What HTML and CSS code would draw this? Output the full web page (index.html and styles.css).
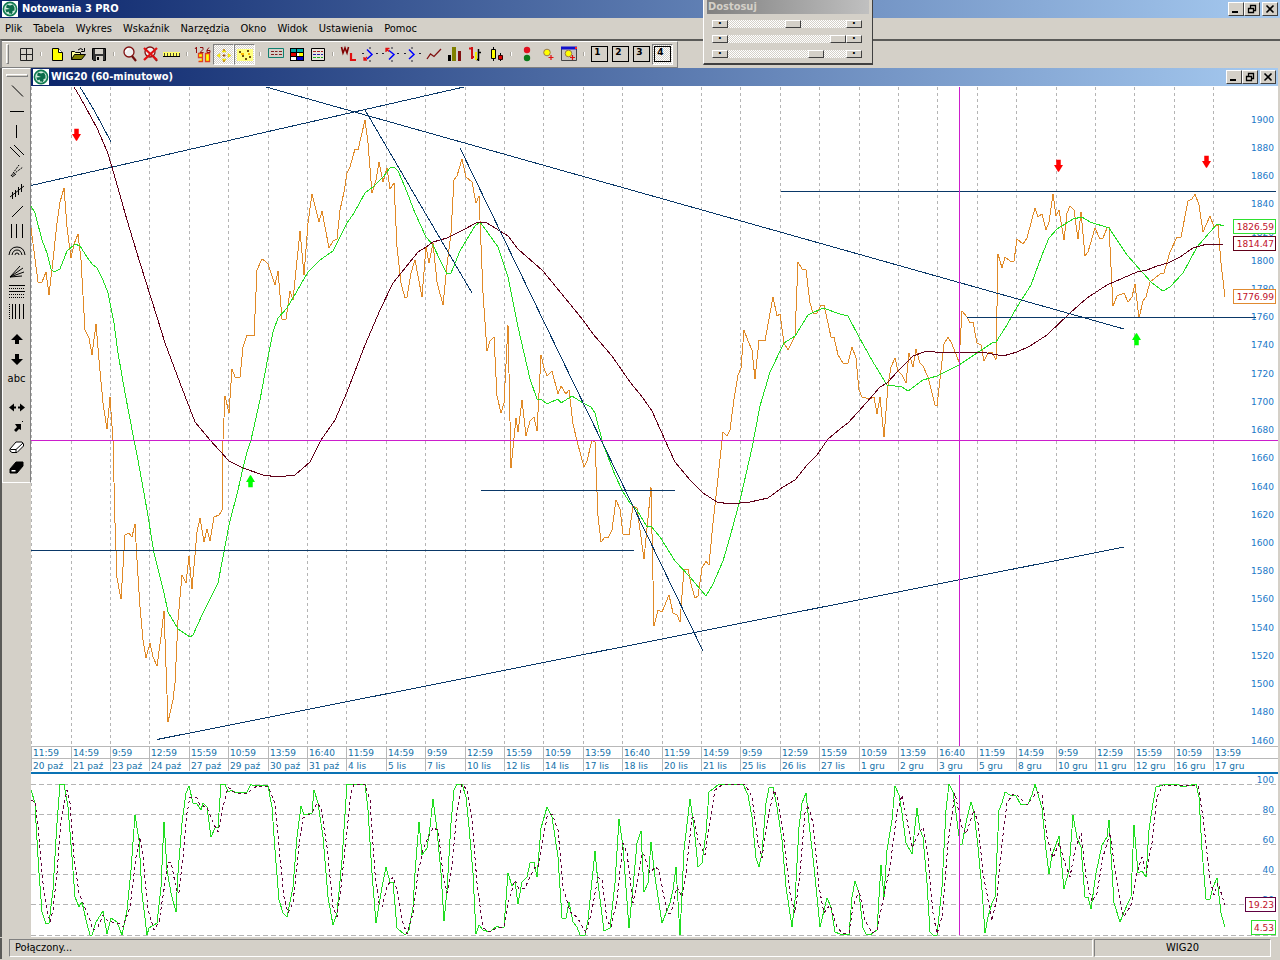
FILE: index.html
```html
<!DOCTYPE html>
<html lang="pl">
<head>
<meta charset="utf-8">
<title>Notowania 3 PRO</title>
<link rel="stylesheet" href="styles.css">
</head>
<body>
<svg class="defs" aria-hidden="true">
  <symbol id="logo" viewBox="0 0 16 16">
    <rect width="16" height="16" fill="#fff"/>
    <circle cx="8" cy="8" r="6.600" fill="#cfeadb" stroke="#0f7a50" stroke-width="1.600"/>
    <path d="M8 8L4 6.500L5 3.500L8 4.500L11 3.500L12.500 6.500L12.500 9.500L10.500 10L10.500 12L7.500 12.800L6.500 10.500L4.500 11.500L3.300 8.500Z" fill="#0b6b4a"/>
    <path d="M8.500 8.500L9.500 13" stroke="#0b6b4a"/>
  </symbol>
  <symbol id="win-min" viewBox="0 0 12 10"><path d="M2 8h6" stroke="#000" stroke-width="2"/></symbol>
  <symbol id="win-restore" viewBox="0 0 12 10"><path d="M4.500 4V1.500h5v5H8M4 1.500h6M2.500 4.500h5v4h-5zM2 4.500h6" fill="none" stroke="#000" stroke-width="1.300"/></symbol>
  <symbol id="win-close" viewBox="0 0 12 10"><path d="M2.500 1.500l7 7M9.500 1.500l-7 7" stroke="#000" stroke-width="1.600"/></symbol>
  <symbol id="arrow-down" viewBox="0 0 10 14"><path d="M2.500 0h5v6H10L5.500 13.500h-1L0 6h2.500z"/></symbol>
  <symbol id="arrow-up" viewBox="0 0 10 14"><path d="M2.500 14h5V8H10L5.500.5h-1L0 8h2.500z"/></symbol>
</svg>

<div class="app">
  <header class="titlebar">
    <svg class="logo"><use href="#logo"/></svg>
    <h1 class="title">Notowania 3 PRO</h1>
    <div class="controls">
      <button class="ctl" aria-label="Minimalizuj"><svg><use href="#win-min"/></svg></button>
      <button class="ctl" aria-label="Przywróć"><svg><use href="#win-restore"/></svg></button>
      <button class="ctl ctl-close" aria-label="Zamknij"><svg><use href="#win-close"/></svg></button>
    </div>
  </header>

  <nav class="menu">
    <button>Plik</button><button>Tabela</button><button>Wykres</button><button>Wskaźnik</button><button>Narzędzia</button><button>Okno</button><button>Widok</button><button>Ustawienia</button><button>Pomoc</button>
  </nav>

  <div class="toolbar-row">
    <div class="toolbar" role="toolbar" aria-label="Narzędzia główne">
      <span class="grip"></span>
      <button class="tb" aria-label="Siatka"><svg viewBox="0 0 20 20"><path d="M4.500 4.500h12v12h-12zM10.500 4v13M4 10.500h13" fill="none" stroke="#222"/></svg></button>
      <span class="sep"></span>
      <button class="tb" aria-label="Nowy"><svg viewBox="0 0 20 20"><path d="M5.500 4.500h6l4 4v8h-10z" fill="#ff0" stroke="#000"/><path d="M11.500 4.500v4h4" fill="#fff" stroke="#000"/></svg></button>
      <button class="tb" aria-label="Otwórz"><svg viewBox="0 0 20 20"><path d="M3.500 15.500v-8h3l1 1h5v3" fill="#ff9" stroke="#000"/><path d="M3.500 15.500l3-5h11l-4 5z" fill="#808000" stroke="#000"/><path d="M10 6q3-3 5 0M16.500 4v3.500h-3.500" fill="none" stroke="#000"/></svg></button>
      <button class="tb" aria-label="Zapisz"><svg viewBox="0 0 20 20"><path d="M3.500 4.500h13v12h-12l-1-1z" fill="#333" stroke="#000"/><path d="M6 5h8v5H6z" fill="#d4d0c8"/><path d="M7 12h7v5H7z" fill="#d4d0c8"/><path d="M8 13h2v3H8z" fill="#000"/></svg></button>
      <span class="sep"></span>
      <button class="tb" aria-label="Powiększ"><svg viewBox="0 0 20 20"><circle cx="9" cy="8" r="5" fill="#eee" stroke="#801010" stroke-width="1.300"/><path d="M5.500 8q1-3 3.500-3" fill="none" stroke="#fff" stroke-width="1.500"/><path d="M12 12l4 5" stroke="#701010" stroke-width="2.200"/></svg></button>
      <button class="tb" aria-label="Anuluj powiększenie"><svg viewBox="0 0 20 20"><circle cx="9" cy="8" r="5" fill="#eee" stroke="#801010" stroke-width="1.300"/><path d="M12 12l4 5" stroke="#701010" stroke-width="2"/><path d="M3 4l13 12M16 4L3 16" stroke="#e01010" stroke-width="2.300"/></svg></button>
      <button class="tb" aria-label="Linijka"><svg viewBox="0 0 20 20"><path d="M1 8h17v5H1z" fill="#ff6"/><path d="M1 12.500h17" stroke="#000"/><path d="M2.500 9v3M5.500 9v3M8.500 9v3M11.500 9v3M14.500 9v3M17.500 9v3" stroke="#443"/></svg></button>
      <span class="sep"></span>
      <button class="tb" aria-label="Wartości"><svg viewBox="0 0 20 20"><path d="M2 5l1.500-2v6M7 3.500h3v2L7 8.500h3.500M16 3.500l-2 2.500v2.500h3V6.500h-3" fill="none" stroke="#901010"/><path d="M9.500 13.500h-4v-4h4v8h-4M12.500 9.500h4v8h-4z" fill="#ff0" stroke="#e04020" stroke-width="1.300"/></svg></button>
      <button class="tb on" aria-pressed="true" aria-label="Kursor"><svg viewBox="0 0 20 20"><path d="M10 4l2 3h-4zM10 17l2-3h-4zM3 10.500l3-2v4zM17 10.500l-3-2v4z" fill="#ff0" stroke="#e0c000" stroke-width=".5"/><path d="M10 9v3M8.500 10.500h3M10 4v2M10 15v2" stroke="#a05010"/></svg></button>
      <button class="tb on" aria-pressed="true" aria-label="Punkty"><svg viewBox="0 0 20 20"><path d="M2 4h16v12H2z" fill="#ffff80"/><path d="M4 6h2v2H4zM12 5h2v2h-2zM7 10h2v2H7zM14 11h2v2h-2zM10 13h2v2h-2z" fill="#705010"/><path d="M6 8h3v2H6zM13 8h2v2h-2z" fill="#fb0"/></svg></button>
      <span class="sep"></span>
      <button class="tb" aria-label="Tabela notowań"><svg viewBox="0 0 20 20"><path d="M2.500 4.500h15v9h-15z" fill="#d4d0c8" stroke="#108070"/><path d="M5 7.500h3M9 7.500h2.500M13 7.500h3M5 10.500h3M9 10.500h2.500M13 10.500h3" stroke="#802020"/></svg></button>
      <button class="tb" aria-label="Mozaika"><svg viewBox="0 0 20 20"><path d="M3 4h14v13H3z" fill="#000"/><path d="M4 5h5v3H4z" fill="#0aa"/><path d="M4 9h5v3H4z" fill="#d00"/><path d="M10 5h6v3h-6z" fill="#0aa"/><path d="M4 13h5v3H4zM10 9h2v3h-2z" fill="#fff"/><path d="M12 9h4v3h-4z" fill="#ff0"/><path d="M10 13h6v3h-6z" fill="#00c"/></svg></button>
      <button class="tb" aria-label="Lista"><svg viewBox="0 0 20 20"><path d="M3.500 4.500h13v12h-13z" fill="#e8e4dc" stroke="#000"/><path d="M5 7.500h10" stroke="#a22" stroke-dasharray="3 1"/><path d="M5 10.500h10" stroke="#22a" stroke-dasharray="3 1"/><path d="M5 13.500h10" stroke="#2a2" stroke-dasharray="3 1"/></svg></button>
      <span class="sep"></span>
      <button class="tb" aria-label="Wskaźnik WL"><svg viewBox="0 0 20 20"><path d="M2.500 3l1.500 6l2-5l2 5l1.500-6" fill="none" stroke="#800000" stroke-width="1.600"/><path d="M12 9v7h5" fill="none" stroke="#e01010" stroke-width="2.200"/></svg></button>
      <button class="tb" aria-label="Fala w dół"><svg viewBox="0 0 20 20"><path d="M7 5.500l5 5l-5 4.500" fill="none" stroke="#00f" stroke-width="1.500"/><path d="M2 9.500h2M16 9.500h2M10 3v2M10 16v2" stroke="#223"/><path d="M4 13v3h3M4 16l3-3" fill="none" stroke="#e01010" stroke-width="1.300"/></svg></button>
      <button class="tb" aria-label="Fala w górę"><svg viewBox="0 0 20 20"><path d="M8 6.500l5 4l-5 5" fill="none" stroke="#00f" stroke-width="1.500"/><path d="M1 9.500h2M16 9.500h2M11 3v2M11 16v2" stroke="#223"/><path d="M5 8V4.500h3.500M5 4.500l3 3" fill="none" stroke="#e01010" stroke-width="1.300"/></svg></button>
      <button class="tb" aria-label="Fala"><svg viewBox="0 0 20 20"><path d="M7 5.500l5 5l-5 4.500" fill="none" stroke="#00f" stroke-width="1.500"/><path d="M2 9.500h2M17 9.500h2M10 3v2M10 16v2" stroke="#223"/></svg></button>
      <button class="tb" aria-label="Liniowy"><svg viewBox="0 0 20 20"><path d="M4 15l3.500-5l3.500 2.500L18 5" fill="none" stroke="#801010" stroke-width="1.300"/></svg></button>
      <button class="tb" aria-label="Słupkowy"><svg viewBox="0 0 20 20"><path d="M4 11h3v6H4z" fill="#000"/><path d="M8 3h4v14H8z" fill="#808000"/><path d="M14 7h3v10h-3z" fill="#801010"/></svg></button>
      <button class="tb" aria-label="Barowy"><svg viewBox="0 0 20 20"><path d="M7 3v12M4 4.500h3M7 13h2" stroke="#d01010" stroke-width="2"/><path d="M13.500 5v12M11 15.500h2.500M13.500 8.500h2.500" stroke="#000" stroke-width="1.500"/><path d="M11 8v8" stroke="#ee0" stroke-width="2"/></svg></button>
      <button class="tb" aria-label="Świecowy"><svg viewBox="0 0 20 20"><path d="M7.500 3v14M14.500 9v8" stroke="#000"/><path d="M5.500 5.500h4v9h-4z" fill="#ff0" stroke="#000"/><path d="M12.500 11.500h4v4h-4z" fill="#d00" stroke="#300"/></svg></button>
      <span class="sep"></span>
      <button class="tb" aria-label="Sygnały"><svg viewBox="0 0 20 20"><circle cx="10" cy="6" r="3.200" fill="#e01020"/><circle cx="10" cy="14" r="3.200" fill="#0a7a1a"/></svg></button>
      <button class="tb" aria-label="Dodaj alarm"><svg viewBox="0 0 20 20"><circle cx="9" cy="8.500" r="3.300" fill="#ff0" stroke="#987a50"/><path d="M13 11v5M10.500 13.500h5" stroke="#e01010" stroke-width="1.200"/></svg></button>
      <button class="tb" aria-label="Okno alarmów"><svg viewBox="0 0 20 20"><path d="M2.500 3.500h15v13h-15z" fill="#c8c4c0" stroke="#444"/><path d="M2 4h16" stroke="#11c" stroke-width="3"/><path d="M16 3h2v2h-2z" fill="#f22"/><circle cx="9.500" cy="9.500" r="3.300" fill="#ff0" stroke="#987a50"/><path d="M13.500 11v5M11 13.500h5" stroke="#e01010" stroke-width="1.200"/></svg></button>
      <span class="sep"></span>
      <button class="tb num"><span>1</span></button>
      <button class="tb num"><span>2</span></button>
      <button class="tb num"><span>3</span></button>
      <button class="tb num on" aria-pressed="true"><span>4</span></button>
    </div>
  </div>

  <div class="body">
    <aside class="side">
      <div class="tools" role="toolbar" aria-label="Rysowanie" aria-orientation="vertical">
        <span class="hgrip"></span>
        <button class="tool" aria-label="Odcinek malejący"><svg viewBox="0 0 20 20"><path d="M5 4.500l11 11"/></svg></button>
        <button class="tool" aria-label="Linia pozioma"><svg viewBox="0 0 20 20"><path d="M3 10.500h14"/></svg></button>
        <button class="tool" aria-label="Linia pionowa"><svg viewBox="0 0 20 20"><path d="M9.500 4v13"/></svg></button>
        <button class="tool" aria-label="Kanał"><svg viewBox="0 0 20 20"><path d="M3 6l10 10M7 4l10 10"/></svg></button>
        <button class="tool" aria-label="Widły"><svg viewBox="0 0 20 20"><path d="M4 15L12 4M4 15l12-9" stroke-dasharray="2 1"/><path d="M5 16l4-3"/></svg></button>
        <button class="tool" aria-label="Regresja"><svg viewBox="0 0 20 20"><path d="M3 16L17 5M5.500 11v7M8.500 9v7M11.500 6v8M14.500 3v8"/></svg></button>
        <button class="tool" aria-label="Linia trendu"><svg viewBox="0 0 20 20"><path d="M5 16L16 5"/></svg></button>
        <button class="tool" aria-label="Cykle"><svg viewBox="0 0 20 20"><path d="M4.500 3v14M9.500 3v14M15.500 3v14"/></svg></button>
        <button class="tool" aria-label="Łuki"><svg viewBox="0 0 20 20"><path d="M2 14Q3 6 10 6t8 8M5 14q1-5 5-5t5 5M8 14q0-2 2-2t2 2"/></svg></button>
        <button class="tool" aria-label="Wachlarz"><svg viewBox="0 0 20 20"><path d="M3 16L13 5M3 16L16 7M3 16l14-5M3 16l12-1"/></svg></button>
        <button class="tool" aria-label="Zniesienia"><svg viewBox="0 0 20 20"><path d="M2 4.500h16M2 10.500h16"/><path d="M2 7.500h16M2 13.500h16M2 16.500h16" stroke-dasharray="1 1"/></svg></button>
        <button class="tool" aria-label="Strefy czasu"><svg viewBox="0 0 20 20"><path d="M5.500 3v15M8.500 3v15M12.500 3v15M16.500 3v15"/><path d="M2.500 3v15" stroke-dasharray="1 1"/></svg></button>
        <span class="vsep"></span>
        <button class="tool solid" aria-label="Strzałka w górę"><svg viewBox="0 0 20 20"><path d="M10 5l6 6h-4v4H8v-4H4z"/></svg></button>
        <button class="tool solid" aria-label="Strzałka w dół"><svg viewBox="0 0 20 20"><path d="M10 16l6-6h-4V5H8v5H4z"/></svg></button>
        <button class="tool text">abc</button>
        <span class="vsep"></span>
        <button class="tool solid" aria-label="Przesuń"><svg viewBox="0 0 20 20"><path d="M2 10.500l5-4v3h2v2H7v3zM18 10.500l-5-4v3h-2v2h2v3z"/></svg></button>
        <button class="tool solid" aria-label="Zaznacz"><svg viewBox="0 0 20 20"><path d="M8 7h6v6l-2-1l-3 3l-2-2l3-3z"/><path d="M15 4h1v1h-1z"/></svg></button>
        <button class="tool" aria-label="Gumka"><svg viewBox="0 0 20 20"><path d="M3 12l6-7h6l1.500 2v2L10 15.500H5L3 14z" fill="#fff"/><path d="M3.500 12.500H9L16 6M9 12.500v3"/></svg></button>
        <button class="tool" aria-label="Usuń wszystko"><svg viewBox="0 0 20 20"><path d="M3 12l6-7h7v4L10 16H3z" fill="#000"/><path d="M4 12.500h5v2.500H4z" fill="#fff"/></svg></button>
      </div>
    </aside>

    <main class="child">
      <div class="titlebar">
        <svg class="logo"><use href="#logo"/></svg>
        <h2 class="title">WIG20 (60-minutowo)</h2>
        <div class="controls">
          <button class="ctl" aria-label="Minimalizuj wykres"><svg><use href="#win-min"/></svg></button>
          <button class="ctl" aria-label="Przywróć wykres"><svg><use href="#win-restore"/></svg></button>
          <button class="ctl ctl-close" aria-label="Zamknij wykres"><svg><use href="#win-close"/></svg></button>
        </div>
      </div>

      <svg class="chart" viewBox="31 86 1247 688" role="img" aria-label="Wykres WIG20">
        <path class="grid" d="M31.500 87V746M71.500 87V746M110.500 87V746M149.500 87V746M189.500 87V746M228.500 87V746M268.500 87V746M307.500 87V746M346.500 87V746M386.500 87V746M425.500 87V746M465.500 87V746M504.500 87V746M543.500 87V746M583.500 87V746M622.500 87V746M662.500 87V746M701.500 87V746M740.500 87V746M780.500 87V746M819.500 87V746M859.500 87V746M898.500 87V746M937.500 87V746M977.500 87V746M1016.500 87V746M1056.500 87V746M1095.500 87V746M1134.500 87V746M1174.500 87V746M1213.500 87V746"/>
        <path class="axis" d="M31 746.500H1278M31 758.500H1278M31.500 746V771M71.500 746V771M110.500 746V771M149.500 746V771M189.500 746V771M228.500 746V771M268.500 746V771M307.500 746V771M346.500 746V771M386.500 746V771M425.500 746V771M465.500 746V771M504.500 746V771M543.500 746V771M583.500 746V771M622.500 746V771M662.500 746V771M701.500 746V771M740.500 746V771M780.500 746V771M819.500 746V771M859.500 746V771M898.500 746V771M937.500 746V771M977.500 746V771M1016.500 746V771M1056.500 746V771M1095.500 746V771M1134.500 746V771M1174.500 746V771M1213.500 746V771"/>

        <polyline class="price" points="31,228 38,282 42,282 46,272 49,295 53,260 57,223 60,202 64,188 67,227 71,258 74,244 78,234 81,260 85,330 89,338 92,355 96,324 99,360 103,403 107,429 110,397 113,440 115,523 117,578 121,599 125,535 129,533 132,537 135,524 137,560 140,607 143,640 146,658 150,643 153,657 157,666 161,637 164,611 168,722 173,700 175,683 178,620 182,575 186,583 189,556 192,589 197,532 200,518 204,542 207,529 210,541 214,517 219,515 222,511 223,440 225,396 229,413 232,369 235,377 240,377 243,347 247,335 254,336 257,270 262,259 265,261 268,264 275,285 278,271 282,319 286,319 290,291 293,300 300,231 304,275 308,223 312,194 319,222 322,211 329,248 333,241 337,239 340,210 344,192 347,173 350,167 355,149 358,150 365,120 368,143 372,193 376,180 379,162 383,182 387,168 390,189 394,183 397,247 401,283 405,298 407,297 411,273 415,260 422,297 426,247 429,263 433,243 437,282 443,305 447,265 451,233 454,180 457,176 462,159 466,177 472,182 476,203 479,196 483,293 487,351 490,341 494,337 497,396 501,413 504,403 508,325 511,468 516,418 518,432 522,400 526,436 530,421 534,417 537,431 541,355 544,368 547,376 552,371 558,394 561,386 566,394 569,390 573,424 577,441 584,467 587,461 592,440 595,442 598,516 601,542 605,537 608,538 612,530 616,500 620,509 623,534 629,535 633,506 637,508 644,559 651,487 654,626 658,610 662,612 669,595 673,613 677,615 680,622 684,569 688,569 691,584 695,598 698,596 702,568 706,561 709,565 713,523 716,496 723,432 727,436 730,430 734,399 738,375 741,368 744,330 748,341 752,350 755,379 759,340 765,341 773,297 777,316 780,314 784,343 788,350 795,336 798,262 802,269 806,270 810,303 813,313 817,313 821,305 824,305 831,337 834,337 838,355 843,363 848,363 852,347 856,358 859,390 862,397 870,399 874,397 877,414 880,397 884,437 888,385 891,367 895,358 898,371 902,375 906,383 909,353 913,367 916,349 920,363 923,366 928,377 935,405 937,406 941,370 944,344 948,337 952,344 959,362 962,311 967,317 970,323 973,322 977,343 981,345 984,361 988,353 992,352 996,360 998,254 1002,268 1005,257 1010,261 1014,261 1017,239 1023,244 1027,238 1035,208 1038,217 1042,214 1046,230 1049,222 1053,194 1056,216 1059,210 1064,240 1067,213 1070,206 1074,210 1078,239 1081,212 1085,256 1088,252 1095,228 1100,239 1103,238 1107,228 1109,227 1113,306 1117,296 1124,293 1128,302 1132,297 1135,284 1139,318 1143,301 1146,297 1150,282 1155,278 1160,274 1164,273 1170,252 1177,237 1181,237 1188,201 1192,199 1195,194 1199,205 1203,232 1210,216 1214,227 1218,225 1221,263 1225,297"/>
        <polyline class="fast" points="31,206 35,213 42,240 47,253 51,269 54,272 60,269 67,251 75,244 80,246 87,257 92,264 97,268 103,280 108,293 114,323 118,353 125,393 134,440 138,460 147,510 154,553 164,593 168,612 178,629 190,637 193,635 203,613 218,583 223,557 229,525 238,490 243,468 247,452 251,440 260,400 268,357 273,332 278,318 287,308 293,298 308,272 320,260 333,251 347,223 354,213 365,193 373,187 383,177 390,168 394,167 398,171 405,187 415,213 426,237 433,245 440,260 447,274 451,273 460,251 475,226 480,222 488,233 498,247 508,277 518,327 530,379 537,399 542,400 547,404 558,399 561,403 572,396 583,403 591,407 595,413 603,444 615,475 623,492 630,503 637,510 647,527 651,526 660,537 675,561 690,577 706,596 713,584 723,561 730,537 741,496 752,448 760,406 770,372 784,343 795,336 808,315 823,308 840,314 848,316 859,337 873,362 887,385 902,387 908,391 923,380 937,376 959,365 980,351 992,343 996,342 1007,325 1017,307 1031,285 1042,255 1049,238 1057,229 1073,219 1082,217 1090,222 1109,228 1127,255 1142,272 1152,283 1163,291 1170,287 1183,273 1197,247 1210,232 1217,224 1224,226"/>
        <polyline class="slow" points="74,87 80,97 97,128 107,151 112,167 127,220 140,263 157,317 165,343 180,383 195,422 210,440 229,461 243,468 263,475 278,477 295,475 310,462 321,440 335,420 347,392 365,345 380,310 393,283 418,252 426,247 433,242 447,238 463,230 478,222 487,223 508,236 518,249 543,271 583,320 593,334 612,356 630,382 643,398 652,411 665,440 675,462 690,480 703,493 717,502 730,504 750,502 768,498 783,487 795,480 807,465 817,455 828,439 840,429 848,423 867,402 880,387 887,383 898,371 913,356 927,351 943,353 957,352 987,353 1003,356 1017,352 1030,346 1047,335 1070,313 1087,298 1107,285 1123,278 1137,272 1147,270 1157,266 1168,263 1180,257 1193,248 1207,244 1223,244"/>

        <path class="trend" d="M80 87L94 110L111 142M31 185.500L464 87M266 87L1124 329M365 110L472 293M460 148L703 651M481 490.500H675M31 550.500H634M157 739.500L1124 547M781 191.500H1276M967 317.500H1256"/>
        <path class="cross" d="M31 440.500H1278M959.500 87V746"/>

        <g class="sell">
          <use href="#arrow-down" x="72" y="128" width="9" height="14"/>
          <use href="#arrow-down" x="1054" y="159" width="9" height="14"/>
          <use href="#arrow-down" x="1202" y="155" width="9" height="14"/>
        </g>
        <g class="buy">
          <use href="#arrow-up" x="246" y="474" width="9" height="14"/>
          <use href="#arrow-up" x="1132" y="332" width="9" height="14"/>
        </g>

        <g class="scale">
          <text x="1274" y="123">1900</text><text x="1274" y="151">1880</text><text x="1274" y="179">1860</text><text x="1274" y="207">1840</text><text x="1274" y="236">1820</text><text x="1274" y="264">1800</text><text x="1274" y="292">1780</text><text x="1274" y="320">1760</text><text x="1274" y="348">1740</text><text x="1274" y="377">1720</text><text x="1274" y="405">1700</text><text x="1274" y="433">1680</text><text x="1274" y="461">1660</text><text x="1274" y="490">1640</text><text x="1274" y="518">1620</text><text x="1274" y="546">1600</text><text x="1274" y="574">1580</text><text x="1274" y="602">1560</text><text x="1274" y="631">1540</text><text x="1274" y="659">1520</text><text x="1274" y="687">1500</text><text x="1274" y="715">1480</text><text x="1274" y="744">1460</text>
        </g>
        <g class="tag">
          <rect x="1233.500" y="219.500" width="42" height="14" stroke="#2ee02e"/><text x="1274" y="230">1826.59</text>
          <rect x="1233.500" y="236.500" width="42" height="14" stroke="#600018"/><text x="1274" y="247">1814.47</text>
          <rect x="1233.500" y="289.500" width="42" height="14" stroke="#e08a30"/><text x="1274" y="300">1776.99</text>
        </g>

        <text class="time" y="756"><tspan x="33">11:59</tspan><tspan x="73">14:59</tspan><tspan x="112">9:59</tspan><tspan x="151">12:59</tspan><tspan x="191">15:59</tspan><tspan x="230">10:59</tspan><tspan x="270">13:59</tspan><tspan x="309">16:40</tspan><tspan x="348">11:59</tspan><tspan x="388">14:59</tspan><tspan x="427">9:59</tspan><tspan x="467">12:59</tspan><tspan x="506">15:59</tspan><tspan x="545">10:59</tspan><tspan x="585">13:59</tspan><tspan x="624">16:40</tspan><tspan x="664">11:59</tspan><tspan x="703">14:59</tspan><tspan x="742">9:59</tspan><tspan x="782">12:59</tspan><tspan x="821">15:59</tspan><tspan x="861">10:59</tspan><tspan x="900">13:59</tspan><tspan x="939">16:40</tspan><tspan x="979">11:59</tspan><tspan x="1018">14:59</tspan><tspan x="1058">9:59</tspan><tspan x="1097">12:59</tspan><tspan x="1136">15:59</tspan><tspan x="1176">10:59</tspan><tspan x="1215">13:59</tspan></text>
        <text class="time" y="769"><tspan x="33">20 paź</tspan><tspan x="73">21 paź</tspan><tspan x="112">23 paź</tspan><tspan x="151">24 paź</tspan><tspan x="191">27 paź</tspan><tspan x="230">29 paź</tspan><tspan x="270">30 paź</tspan><tspan x="309">31 paź</tspan><tspan x="348">4 lis</tspan><tspan x="388">5 lis</tspan><tspan x="427">7 lis</tspan><tspan x="467">10 lis</tspan><tspan x="506">12 lis</tspan><tspan x="545">14 lis</tspan><tspan x="585">17 lis</tspan><tspan x="624">18 lis</tspan><tspan x="664">20 lis</tspan><tspan x="703">21 lis</tspan><tspan x="742">25 lis</tspan><tspan x="782">26 lis</tspan><tspan x="821">27 lis</tspan><tspan x="861">1 gru</tspan><tspan x="900">2 gru</tspan><tspan x="939">3 gru</tspan><tspan x="979">5 gru</tspan><tspan x="1018">8 gru</tspan><tspan x="1058">10 gru</tspan><tspan x="1097">11 gru</tspan><tspan x="1136">12 gru</tspan><tspan x="1176">16 gru</tspan><tspan x="1215">17 gru</tspan></text>
        <path class="divider" d="M31 773H1278"/>
      </svg>

      <svg class="chart" viewBox="31 774 1247 163" role="img" aria-label="Oscylator stochastyczny">
        <path class="level" d="M31 784.500H1278M31 814.500H1278M31 844.500H1278M31 874.500H1278M31 904.500H1278M31 935.500H1278"/>
        <polyline class="fast" points="31,790 35,803 36,823 39,873 42,912 46,924 49,923 53,890 57,823 60,784 64,784 68,807 72,857 75,897 79,907 82,902 86,920 90,935 92,935 96,922 103,911 107,934 111,918 117,922 122,935 127,910 131,870 135,815 139,840 142,893 147,935 149,928 157,923 161,887 164,822 167,870 171,893 176,912 178,873 182,823 186,793 189,786 193,803 197,804 201,810 203,803 207,807 211,837 215,828 218,827 221,784 225,784 228,792 232,790 236,793 240,792 245,793 247,792 251,784 253,786 262,785 268,786 272,807 275,850 279,900 283,913 287,917 293,887 297,837 301,806 304,815 312,813 314,790 318,803 323,837 328,897 333,925 337,913 342,860 347,784 365,784 368,810 372,873 376,923 382,887 386,867 390,882 393,882 397,928 405,935 409,930 413,907 415,873 419,822 422,855 427,848 430,827 433,799 437,830 441,873 444,921 447,890 451,823 454,790 457,784 462,784 466,797 469,827 473,873 476,934 479,925 483,930 490,932 497,926 500,928 504,927 508,873 512,886 515,882 518,904 522,882 527,877 530,863 534,862 537,877 541,828 547,807 552,817 558,857 562,918 566,918 569,902 573,922 577,927 580,935 585,935 588,920 595,851 598,883 604,931 610,928 615,883 619,819 623,847 629,928 633,887 637,843 641,831 644,892 648,883 651,842 655,877 662,923 670,903 673,890 676,867 680,935 684,850 690,799 694,827 698,867 702,863 706,833 709,792 713,789 719,784 743,784 748,795 752,817 756,858 759,867 762,853 766,803 769,788 773,787 777,807 782,840 786,887 792,927 795,900 799,827 802,803 806,793 809,823 814,867 820,927 827,898 831,907 835,932 840,934 849,935 852,897 855,881 859,893 863,928 866,934 870,935 877,930 881,865 884,897 887,850 892,820 895,786 899,795 902,813 906,843 912,854 917,808 920,830 923,837 927,883 930,932 933,935 937,935 942,887 946,810 949,784 953,792 956,813 960,844 962,844 967,818 971,802 974,812 978,847 982,890 985,933 988,917 992,903 995,897 999,810 1002,803 1005,792 1010,795 1016,796 1021,805 1028,804 1032,795 1035,784 1042,808 1046,850 1049,874 1052,855 1059,836 1064,889 1069,870 1073,815 1077,838 1081,847 1085,897 1088,897 1091,909 1096,873 1102,845 1107,837 1109,820 1112,870 1114,903 1120,922 1124,912 1128,903 1131,897 1134,825 1138,873 1142,871 1146,877 1149,830 1153,803 1156,787 1163,785 1178,784 1182,787 1187,786 1196,784 1199,797 1202,850 1206,899 1210,899 1213,887 1217,878 1221,913 1225,927"/>
        <polyline class="signal" points="31,800 35,802 38,827 43,883 47,910 50,922 53,910 57,873 61,820 67,790 70,803 74,857 79,893 83,903 89,917 93,930 98,927 103,915 107,920 115,923 119,923 123,927 130,907 136,857 140,837 143,857 148,910 154,930 159,922 165,883 168,862 171,862 177,893 179,892 183,857 187,813 190,797 197,798 200,805 207,807 213,823 218,832 223,807 228,787 235,793 247,793 257,786 268,786 275,803 280,857 284,897 288,913 293,903 300,837 303,818 312,813 317,803 321,808 327,847 333,907 337,917 341,887 347,830 351,793 354,784 365,785 370,800 375,873 379,903 382,907 387,887 393,877 397,890 402,920 407,934 413,913 418,873 423,850 426,842 433,828 438,830 443,873 447,893 452,867 457,810 462,784 467,790 472,820 477,883 483,928 490,932 497,928 504,927 508,903 515,880 519,889 525,888 530,877 535,867 538,867 543,840 547,817 552,814 558,830 563,887 570,912 577,917 586,933 592,910 598,877 602,880 607,920 611,927 617,900 623,843 627,853 633,903 637,883 642,853 644,855 650,873 655,867 659,870 667,913 671,913 677,887 682,897 686,873 692,818 694,817 698,840 705,855 710,820 715,790 722,785 745,784 752,797 758,843 762,858 767,823 774,790 778,800 784,840 790,893 795,913 800,873 805,813 808,805 813,823 819,887 824,913 830,905 837,927 843,934 849,933 853,907 859,890 865,920 872,933 877,930 883,900 890,867 897,813 902,795 907,820 912,848 917,837 923,827 928,857 933,913 937,934 942,917 948,843 955,793 962,827 966,834 974,810 978,823 983,873 992,921 997,897 1002,843 1007,803 1013,794 1018,796 1027,805 1037,792 1042,795 1047,837 1053,858 1059,843 1065,863 1070,877 1075,850 1081,833 1086,877 1092,902 1097,893 1103,857 1110,833 1115,870 1121,907 1124,917 1131,905 1137,873 1142,857 1146,873 1152,843 1157,797 1163,785 1198,786 1203,817 1210,880 1214,895 1218,883 1225,905"/>
        <path class="cross" d="M959.500 775V935"/>
        <g class="scale">
          <text x="1274" y="783">100</text><text x="1274" y="813">80</text><text x="1274" y="843">60</text><text x="1274" y="873">40</text><text x="1274" y="903">20</text>
        </g>
        <g class="tag">
          <rect x="1245.500" y="897.500" width="30" height="14" stroke="#600040"/><text x="1274" y="908">19.23</text>
          <rect x="1251.500" y="920.500" width="24" height="14" stroke="#2ee02e"/><text x="1274" y="931">4.53</text>
        </g>
      </svg>
    </main>
  </div>

  <footer class="status">
    <div class="cell grow">Połączony...</div>
    <div class="cell symbol">WIG20</div>
  </footer>

  <section class="palette" aria-label="Dostosuj">
    <h2 class="palette-title">Dostosuj</h2>
    <div class="slider"><button aria-label="Mniej">·</button><input type="range" min="0" max="102" value="57" aria-label="Zakres"><button aria-label="Więcej">·</button></div>
    <div class="slider"><button aria-label="Mniej">·</button><input type="range" min="0" max="102" value="102" aria-label="Pozycja"><button aria-label="Więcej">·</button></div>
    <div class="slider"><button aria-label="Mniej">·</button><input type="range" min="0" max="102" value="80" aria-label="Skala"><button aria-label="Więcej">·</button></div>
  </section>
</div>
</body>
</html>
```
FILE: styles.css
```css
:root {
  --face: #d4d0c8;
  --shadow: #808080;
  --dark: #404040;
  --ui: "DejaVu Sans Condensed", "DejaVu Sans", sans-serif;
}

* { box-sizing: border-box; }

body {
  margin: 0;
  background: var(--face);
  color: #000;
  font: 11px/14px "Liberation Sans", sans-serif;
  font-family: var(--ui);
}

button {
  margin: 0;
  padding: 0;
  border: 0;
  background: none;
  color: inherit;
  font: inherit;
}

svg { display: block; }
.defs { display: none; }

.app {
  position: relative;
  display: flex;
  flex-direction: column;
  min-height: 100vh;
  background: var(--face);
}

/* Title bars */
.titlebar {
  display: flex;
  align-items: center;
  height: 18px;
  padding: 0 2px;
  background: linear-gradient(to right, #0a246a, #a6caf0);
  color: #fff;
}
.logo { width: 16px; height: 16px; }
.title {
  flex: 1;
  margin: 0 0 0 4px;
  font-size: 11px;
  line-height: 14px;
  font-weight: bold;
}
.child .title { margin-left: 2px; }
.controls { display: flex; }
.ctl {
  display: grid;
  place-items: center;
  width: 16px;
  height: 14px;
  background: var(--face);
  border: 1px solid;
  border-color: #fff var(--dark) var(--dark) #fff;
}
.ctl-close { margin-left: 2px; }
.ctl svg { width: 12px; height: 10px; }

/* Menu */
.menu {
  display: flex;
  align-items: center;
  height: 21px;
}
.menu button { padding: 0 6px 0 5px; }

/* Main toolbar */
.toolbar-row {
  display: flex;
  height: 29px;
  border-top: 2px solid #5a5a58;
  border-left: 2px solid var(--shadow);
}
.toolbar {
  display: flex;
  align-items: center;
  padding: 0 4px 1px;
  border-top: 1px solid #fff;
  border-right: 1px solid var(--shadow);
  border-bottom: 1px solid var(--shadow);
}
.grip {
  width: 3px;
  height: 20px;
  margin-right: 6px;
  border: 1px solid;
  border-color: #fff var(--shadow) var(--shadow) #fff;
}
.tb {
  display: grid;
  place-items: center;
  width: 21px;
  height: 21px;
}
.tb svg { width: 20px; height: 20px; }
.on {
  background: repeating-conic-gradient(#fff 0 25%, var(--face) 0 50%) 0 0 / 2px 2px;
  border: 1px solid;
  border-color: var(--shadow) #fff #fff var(--shadow);
}
.sep {
  width: 2px;
  height: 4px;
  margin: 0 4px;
  border-left: 1px solid #a8a49c;
  border-right: 1px solid #fff;
}
.num span {
  width: 17px;
  height: 16px;
  padding-right: 4px;
  border: 1px solid #000;
  font: bold 9px/11px "DejaVu Sans", sans-serif;
  text-align: center;
}

/* Drawing tools */
.body { display: flex; }
.side {
  flex: none;
  width: 31px;
  border-left: 2px solid #5a5a58;
}
.tools {
  display: flex;
  flex-direction: column;
  align-items: center;
  padding: 5px 0;
  border: 1px solid;
  border-color: #fff var(--shadow) #fff #fff;
}
.hgrip {
  width: 22px;
  height: 3px;
  margin-bottom: 4px;
  border: 1px solid;
  border-color: #fff var(--shadow) var(--shadow) #fff;
}
.tool {
  width: 20px;
  height: 20px;
}
.tool svg {
  width: 20px;
  height: 20px;
  fill: none;
  stroke: #000;
  stroke-width: 1;
}
.solid svg { fill: #000; stroke: none; }
.text { line-height: 20px; }
.vsep { height: 8px; }

/* Charts */
.child { flex: 1; min-width: 0; border-right: 2px solid var(--face); }
.chart {
  width: 100%;
  height: auto;
  background: #fff;
  fill: none;
  font: 9px "DejaVu Sans", sans-serif;
}
.chart path, .chart polyline, .chart rect { shape-rendering: crispEdges; }
.grid { stroke: #b4b4b4; stroke-dasharray: 3 3; }
.level { stroke: #b4b4b4; stroke-dasharray: 5 3; }
.axis { stroke: #b8b8b8; }
.price { stroke: #e08a28; }
.fast { stroke: #22dd22; }
.slow { stroke: #600018; }
.signal { stroke: #600038; stroke-dasharray: 3 3; }
.trend { stroke: #0a3868; }
.cross { stroke: #cc1ecc; }
.divider { stroke: #0a72b4; stroke-width: 2; }
.sell { fill: #f00; }
.buy { fill: #0f0; }
.scale { fill: #1a78c8; text-anchor: end; }
.time { fill: #1470a8; }
.tag rect { fill: #fff; }
.tag text { fill: #c01028; text-anchor: end; }

/* Status bar */
.status {
  display: flex;
  gap: 1px;
  margin-top: 1px;
  padding: 1px 9px 2px 7px;
  border-left: 2px solid #5a5a58;
}
.cell {
  height: 18px;
  padding: 0 5px;
  border: 1px solid;
  border-color: var(--shadow) #fff #fff var(--shadow);
  line-height: 16px;
}
.grow { flex: 1; }
.symbol { width: 177px; text-align: center; }

/* Floating palette */
.palette {
  position: absolute;
  top: 0;
  left: 703px;
  width: 170px;
  padding: 0 3px;
  background: var(--face);
  border: 1px solid;
  border-color: var(--face) var(--dark) var(--dark) #fff;
  border-top: 0;
  border-bottom-width: 2px;
}
.palette-title {
  margin: 0 0 6px;
  padding-left: 1px;
  background: linear-gradient(to right, #808080, #c0c0c0);
  color: var(--face);
  font-size: 11px;
  line-height: 14px;
  font-weight: bold;
}
.slider {
  display: flex;
  height: 8px;
  margin: 0 7px 7px 5px;
}
.slider:last-child { margin-bottom: 5px; }
.slider button {
  flex: none;
  width: 16px;
  border: 1px solid;
  border-color: #fff var(--dark) var(--dark) #fff;
  font-weight: bold;
  line-height: 6px;
}
.slider input {
  flex: 1;
  min-width: 0;
  height: 8px;
  margin: 0;
  appearance: none;
  background: repeating-conic-gradient(#fff 0 25%, var(--face) 0 50%) 0 0 / 2px 2px;
}
.slider input::-webkit-slider-thumb {
  appearance: none;
  width: 16px;
  height: 8px;
  background: var(--face);
  border: 1px solid;
  border-color: #fff var(--dark) var(--dark) #fff;
}
```
